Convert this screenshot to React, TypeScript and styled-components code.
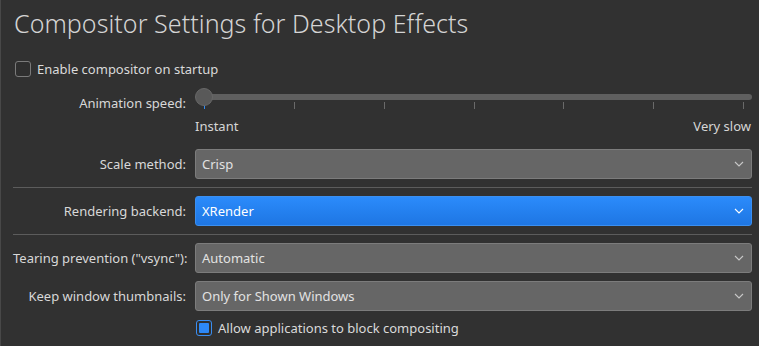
import React from "react";
import styled, { createGlobalStyle } from "styled-components";

const Global = createGlobalStyle`
  html, body { margin: 0; padding: 0; background: #313131; }
  body { font-family: "Noto Sans", "DejaVu Sans", sans-serif; }
`;

const Page = styled.div`
  box-sizing: border-box;
  width: 759px;
  height: 346px;
  background: #313131;
  border-left: 1px solid #484848;
  padding: 8px 7px 0 12px;
  color: #dadada;
  font-size: 13px;
  line-height: 18px;
  overflow: hidden;
`;

const Title = styled.h1`
  margin: 0 0 22px 1px;
  font-size: 25px;
  font-weight: 300;
  line-height: 30px;
  color: #d4d4d4;
  letter-spacing: 0.05px;
`;

const CheckRow = styled.label<{ $indent?: number }>`
  display: flex;
  align-items: center;
  gap: 6px;
  height: 18px;
  margin-left: ${(p) => p.$indent ?? 0}px;
  color: #dadada;
`;

const Box = styled.span<{ $checked?: boolean }>`
  box-sizing: border-box;
  width: 16px;
  height: 16px;
  border-radius: 3px;
  border: 1px solid ${(p) => (p.$checked ? "#3a8ef2" : "#7b7b7b")};
  background: #2f2f2f;
  display: flex;
  align-items: center;
  justify-content: center;
  flex: none;
  &::after {
    content: "";
    display: ${(p) => (p.$checked ? "block" : "none")};
    width: 10px;
    height: 10px;
    border-radius: 1px;
    background: #2d88f6;
  }
`;

const Form = styled.div`
  display: grid;
  grid-template-columns: 174px 1fr;
  column-gap: 8px;
  row-gap: 8px;
  margin-top: 10px;
`;

const Label = styled.div<{ $top?: number }>`
  text-align: right;
  white-space: nowrap;
  align-self: ${(p) => (p.$top !== undefined ? "start" : "center")};
  margin-top: ${(p) => p.$top ?? 0}px;
  margin-right: 1px;
  color: #d8d8d8;
`;

const SliderBlock = styled.div`
  padding-bottom: 6px;
`;

const SliderArea = styled.div`
  position: relative;
  height: 22px;
`;

const Track = styled.div`
  position: absolute;
  left: 9px;
  right: 0;
  top: 6px;
  height: 6px;
  border-radius: 3px;
  background: #5f5f5f;
`;

const Tick = styled.div<{ $active?: boolean }>`
  position: absolute;
  top: 14px;
  width: 1px;
  height: 7px;
  background: ${(p) => (p.$active ? "#2f8cf8" : "#6a6a6a")};
`;

const Handle = styled.div`
  position: absolute;
  left: 0;
  top: 0;
  box-sizing: border-box;
  width: 18px;
  height: 18px;
  border-radius: 50%;
  background: #595959;
  border: 1px solid #686868;
`;

const SliderLabels = styled.div`
  display: flex;
  justify-content: space-between;
  margin-top: 7px;
  padding-right: 1px;
  color: #d6d6d6;
`;

const Combo = styled.div<{ $active?: boolean }>`
  box-sizing: border-box;
  height: 30px;
  display: flex;
  align-items: center;
  justify-content: space-between;
  padding: 0 7px 0 6px;
  border-radius: 3px;
  border: 1px solid ${(p) => (p.$active ? "#3b8ff0" : "#7c7c7c")};
  background: ${(p) =>
    p.$active ? "linear-gradient(#2b8bfb, #1e76e3)" : "#666666"};
  color: ${(p) => (p.$active ? "#ffffff" : "#e2e2e2")};
`;

const Separator = styled.div`
  grid-column: 1 / -1;
  height: 1px;
  background: #5c5c5c;
`;

const Chevron = ({ light }: { light?: boolean }) => (
  <svg width="10" height="6" viewBox="0 0 10 6">
    <path
      d="M1 1 L5 5 L9 1"
      fill="none"
      stroke={light ? "#ffffff" : "#c8c8c8"}
      strokeWidth="1.1"
    />
  </svg>
);

const ComboBox = ({ value, active }: { value: string; active?: boolean }) => (
  <Combo $active={active}>
    <span>{value}</span>
    <Chevron light={active} />
  </Combo>
);

const ticks = [0, 1, 2, 3, 4, 5, 6];

export default function App() {
  return (
    <>
      <Global />
      <Page>
        <Title>Compositor Settings for Desktop Effects</Title>
        <CheckRow $indent={2}>
          <Box />
          <span>Enable compositor on startup</span>
        </CheckRow>
        <Form>
          <Label $top={6}>Animation speed:</Label>
          <SliderBlock>
            <SliderArea>
              <Track />
              {ticks.map((i) => (
                <Tick
                  key={i}
                  $active={i === 0}
                  style={{ left: `calc(9px + (100% - 18px) * ${i / 6})` }}
                />
              ))}
              <Handle />
            </SliderArea>
            <SliderLabels>
              <span>Instant</span>
              <span>Very slow</span>
            </SliderLabels>
          </SliderBlock>

          <Label>Scale method:</Label>
          <ComboBox value="Crisp" />

          <Separator />

          <Label>Rendering backend:</Label>
          <ComboBox value="XRender" active />

          <Separator />

          <Label>Tearing prevention ("vsync"):</Label>
          <ComboBox value="Automatic" />

          <Label>Keep window thumbnails:</Label>
          <ComboBox value="Only for Shown Windows" />

          <div />
          <CheckRow $indent={1}>
            <Box $checked />
            <span>Allow applications to block compositing</span>
          </CheckRow>
        </Form>
      </Page>
    </>
  );
}
